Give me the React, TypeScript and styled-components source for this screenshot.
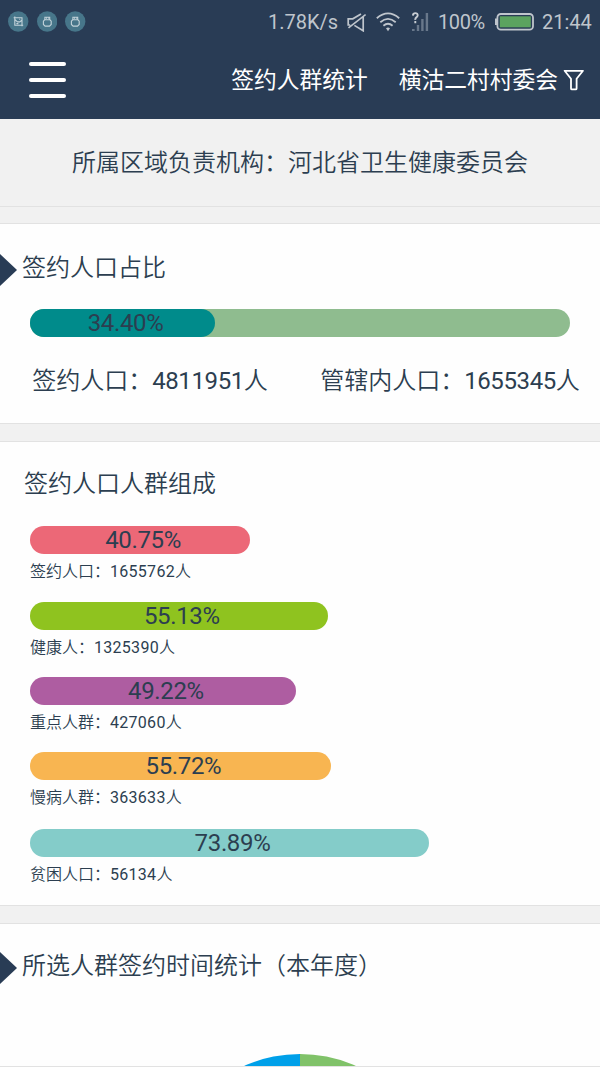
import React from 'react';
import styled, { createGlobalStyle } from 'styled-components';

const GlobalStyle = createGlobalStyle`
  * { box-sizing: border-box; }
  body {
    margin: 0;
    background: #f1f1f1;
    color: #2c3e50;
    font-family: Roboto, "Noto Sans CJK SC", sans-serif;
    font-weight: 350;
    overflow: hidden;
  }
`;

const Screen = styled.div`
  width: 600px;
  height: 1067px;
  overflow: hidden;
  display: flex;
  flex-direction: column;
`;

const Header = styled.header`
  flex: none;
  height: 119px;
  background: #293c55;
`;

const StatusBar = styled.div`
  height: 41px;
  padding: 2px 8px 0;
  display: flex;
  align-items: center;
  color: #bfc5cc;
  font-size: 20px;
  font-weight: 400;
`;

const Notices = styled.div`
  display: flex;
  gap: 8px;
  flex: 1;
`;

const StatusText = styled.span<{ $width: number; $spacing?: number }>`
  width: ${(p) => p.$width}px;
  letter-spacing: ${(p) => p.$spacing ?? 0}px;
  white-space: nowrap;
`;

const StatusIcon = styled.svg<{ $gap: number }>`
  flex: none;
  margin-right: ${(p) => p.$gap}px;
`;

const NavBar = styled.nav`
  height: 78px;
  padding: 0 16px 0 29px;
  display: flex;
  align-items: center;
  color: #fff;
  font-size: 22.75px;
  font-weight: 400;
`;

const MenuButton = styled.div`
  width: 37px;
  height: 37px;
  display: flex;
  flex-direction: column;
  justify-content: space-between;
  margin-right: auto;
`;

const MenuLine = styled.span`
  height: 4.4px;
  border-radius: 2px;
  background: #fff;
`;

const NavText = styled.span<{ $gap?: number }>`
  margin-right: ${(p) => p.$gap ?? 0}px;
  padding-bottom: 3px;
`;

const Region = styled.div`
  flex: none;
  height: 88px;
  padding-bottom: 5px;
  border-bottom: 1px solid #e2e2e2;
  display: flex;
  align-items: center;
  justify-content: center;
  font-size: 24px;
`;

const Card = styled.section<{ $height: number; $gap: number }>`
  flex: none;
  height: ${(p) => p.$height}px;
  margin-top: ${(p) => p.$gap}px;
  background: #fefefe;
  border: solid #e2e2e2;
  border-width: 1px 0;
`;

const CardTitle = styled.h2<{ $top: number; $left?: number }>`
  margin: 0;
  padding: ${(p) => p.$top}px 0 0 ${(p) => p.$left ?? 0}px;
  display: flex;
  align-items: center;
  gap: 5px;
  height: ${(p) => p.$top + 36}px;
  font-size: 24px;
  font-weight: 350;
  line-height: 36px;
`;

const Marker = styled.span`
  width: 17px;
  height: 32px;
  margin-top: 4px;
  background: #293c55;
  clip-path: polygon(0 0, 100% 50%, 0 100%);
`;

const Track = styled.div`
  margin: 23px 30px 0;
  height: 28px;
  border-radius: 14px;
  background: #8fbc8f;
`;

const Bar = styled.div<{ $color: string }>`
  height: 28px;
  padding-left: 6px;
  border-radius: 14px;
  background: ${(p) => p.$color};
  text-align: center;
  font-size: 24px;
  font-weight: 400;
  letter-spacing: -0.35px;
  line-height: 28px;
`;

const Totals = styled.div`
  margin-top: 26px;
  display: grid;
  grid-template-columns: 1fr 1fr;
  text-align: center;
  font-size: 24px;
  line-height: 36px;
`;

const Num = styled.span<{ $spacing: number }>`
  font-weight: 400;
  letter-spacing: ${(p) => p.$spacing}px;
`;

const Groups = styled.div`
  padding: 24px 30px 0;
`;

const Group = styled.div<{ $height: number }>`
  height: ${(p) => p.$height}px;
`;

const GroupLabel = styled.div`
  margin-top: 6px;
  font-size: 16px;
  line-height: 24px;
`;

const PieRow = styled.div`
  display: flex;
  justify-content: center;
  margin-top: 70px;
  height: 12px;
  overflow: hidden;
`;

const groups = [
  { label: '签约人口', count: '1655762', percent: 40.75, color: '#ec6877', height: 76.4 },
  { label: '健康人', count: '1325390', percent: 55.13, color: '#8fc31f', height: 75 },
  { label: '重点人群', count: '427060', percent: 49.22, color: '#ae5da1', height: 75 },
  { label: '慢病人群', count: '363633', percent: 55.72, color: '#f8b551', height: 76.6 },
  { label: '贫困人口', count: '56134', percent: 73.89, color: '#84ccc9', height: 60 },
];

function NoticeDot({ kind }: { kind: 'picture' | 'robot' }) {
  return (
    <svg width="20.5" height="21" viewBox="0 0 20.5 21">
      <circle cx="10.2" cy="10.5" r="10.2" fill="#47768a" />
      <g fill="none" stroke="#c3d3da" strokeWidth="1.1">
        {kind === 'picture' ? (
          <path d="M6.8 5.6v8.6h8.4M5.6 6.7h8.4v8.6M7 8.6l2.4 2.2M9.2 10.9h2.6l2-1.6M11.2 8.2h1M8.4 12.6h2" />
        ) : (
          <path d="M7.9 8.7V6.2h4.8v2.5M7.6 8.8h5.4l1.2 1.4v3.2l-1.7 1.7H8.1l-1.7-1.7v-3.2zM9 7.4h.7M10.9 7.4h.7" />
        )}
      </g>
    </svg>
  );
}

export default function App() {
  return (
    <>
      <GlobalStyle />
      <Screen>
        <Header>
          <StatusBar>
            <Notices>
              <NoticeDot kind="picture" />
              <NoticeDot kind="robot" />
              <NoticeDot kind="robot" />
            </Notices>
            <StatusText $width={79}>1.78K/s</StatusText>
            <StatusIcon $gap={10} width="19" height="20" viewBox="0 0 19 20" fill="none" stroke="#bfc5cc" strokeWidth="1.7">
              <path d="M1.5 15.8 18.6 2.6M3.2 13H1.2V6.8h4.6L14 2M16.2 5v13.8L7.4 13.4" />
            </StatusIcon>
            <StatusIcon $gap={12} width="24" height="20" viewBox="0 0 24 20" fill="none" stroke="#bfc5cc" strokeWidth="1.8">
              <path d="M.8 6.2Q12-3.4 23.2 6.2M4.3 10.2Q12 3.6 19.7 10.2M7.4 13.8Q12 9.8 16.6 13.8" />
              <path d="M10 16.2Q12 14.6 14 16.2L12 19.2Z" fill="#bfc5cc" stroke="none" />
            </StatusIcon>
            <StatusIcon $gap={9} width="17" height="20" viewBox="0 0 17 20">
              <path d="M0 17h2.6v2H0zM4.8 13h2.4v6H4.8zM9.2 7h2.4v12H9.2zM13.7 1h2.4v18h-2.4z" fill="#69788b" />
              <path d="M.9 3.6Q1 1.1 3.3 1.1T5.7 3.3Q5.7 4.5 4.4 5.4T3.3 7.8M3.3 9v2.2" fill="none" stroke="#c8cdd3" strokeWidth="1.9" />
            </StatusIcon>
            <StatusText $width={57} $spacing={-0.4}>
              100%
            </StatusText>
            <StatusIcon $gap={8} width="39" height="18" viewBox="0 0 39 18">
              <rect x="2.4" y="1" width="35.6" height="15.6" rx="3.4" fill="none" stroke="#bfc5cc" strokeWidth="1.8" />
              <path d="M0 5.5h2v6.5H0z" fill="#bfc5cc" />
              <rect x="4.8" y="3.3" width="31" height="11" fill="#5ba35f" />
            </StatusIcon>
            <StatusText $width={50}>21:44</StatusText>
          </StatusBar>
          <NavBar>
            <MenuButton>
              <MenuLine />
              <MenuLine />
              <MenuLine />
            </MenuButton>
            <NavText $gap={31}>签约人群统计</NavText>
            <NavText>横沽二村村委会</NavText>
            <svg width="26" height="24" viewBox="0 0 26 24" fill="none" stroke="#fff" strokeWidth="1.8" strokeLinejoin="round">
              <path d="M6.6 2.8H25L18.6 10.8V20.4Q18.6 21.4 17.6 21.4H14Q13 21.4 13 20.4V10.8Z" />
            </svg>
          </NavBar>
        </Header>

        <Region>所属区域负责机构：河北省卫生健康委员会</Region>

        <Card $height={201} $gap={16}>
          <CardTitle $top={26}>
            <Marker />
            签约人口占比
          </CardTitle>
          <Track>
            <Bar $color="#008b8b" style={{ width: '34.3%' }}>
              34.40%
            </Bar>
          </Track>
          <Totals>
            <div>
              签约人口：<Num $spacing={-0.4}>4811951</Num>人
            </div>
            <div>
              管辖内人口：<Num $spacing={-0.4}>1655345</Num>人
            </div>
          </Totals>
        </Card>

        <Card $height={465} $gap={17}>
          <CardTitle $top={24} $left={24}>
            签约人口人群组成
          </CardTitle>
          <Groups>
            {groups.map((g) => (
              <Group key={g.label} $height={g.height}>
                <Bar $color={g.color} style={{ width: `${g.percent}%` }}>
                  {g.percent}%
                </Bar>
                <GroupLabel>
                  {g.label}：<Num $spacing={0.28}>{g.count}</Num>人
                </GroupLabel>
              </Group>
            ))}
          </Groups>
        </Card>

        <Card $height={144} $gap={17}>
          <CardTitle $top={24}>
            <Marker />
            所选人群签约时间统计（本年度）
          </CardTitle>
          <PieRow>
            <svg width="272" height="272" viewBox="0 0 272 272">
              <path d="M136 0A136 136 0 0 0 136 272Z" fill="#00a0e9" />
              <path d="M136 0A136 136 0 0 1 136 272Z" fill="#80c269" />
            </svg>
          </PieRow>
        </Card>
      </Screen>
    </>
  );
}
